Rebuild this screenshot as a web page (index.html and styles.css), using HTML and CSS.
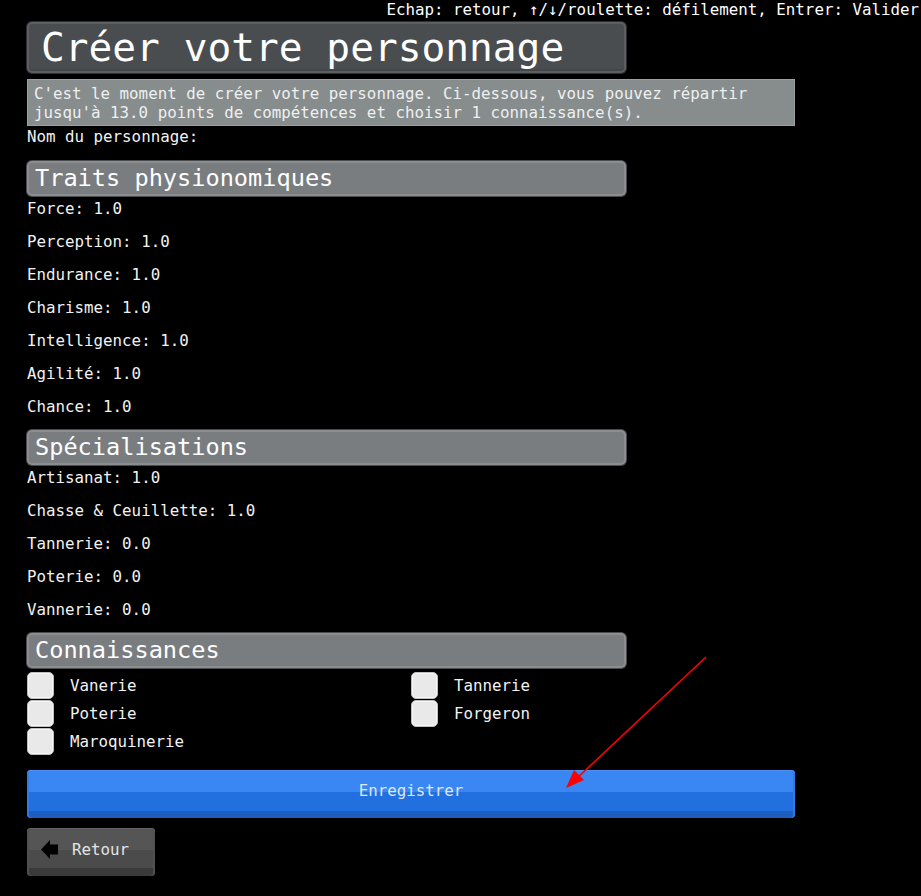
FILE: index.html
```html
<!DOCTYPE html>
<html lang="fr">
<head>
<meta charset="utf-8">
<title>Créer votre personnage</title>
<link rel="stylesheet" href="styles.css">
</head>
<body>
<div class="hint">Echap: retour, ↑/↓/roulette: défilement, Entrer: Valider</div>
<main class="page">
  <h1 class="title">Créer votre personnage</h1>
  <p class="desc">C'est le moment de créer votre personnage. Ci-dessous, vous pouvez répartir jusqu'à 13.0 points de compétences et choisir 1 connaissance(s).</p>
  <div class="name">Nom du personnage:</div>

  <h2 class="section">Traits physionomiques</h2>
  <ul class="stats">
    <li>Force: 1.0</li>
    <li>Perception: 1.0</li>
    <li>Endurance: 1.0</li>
    <li>Charisme: 1.0</li>
    <li>Intelligence: 1.0</li>
    <li>Agilité: 1.0</li>
    <li>Chance: 1.0</li>
  </ul>

  <h2 class="section">Spécialisations</h2>
  <ul class="stats">
    <li>Artisanat: 1.0</li>
    <li>Chasse &amp; Ceuillette: 1.0</li>
    <li>Tannerie: 0.0</li>
    <li>Poterie: 0.0</li>
    <li>Vannerie: 0.0</li>
  </ul>

  <h2 class="section">Connaissances</h2>
  <div class="checks">
    <label class="check"><span class="box"></span>Vanerie</label>
    <label class="check"><span class="box"></span>Tannerie</label>
    <label class="check"><span class="box"></span>Poterie</label>
    <label class="check"><span class="box"></span>Forgeron</label>
    <label class="check"><span class="box"></span>Maroquinerie</label>
  </div>

  <button class="btn-save"><span>Enregistrer</span></button>
  <button class="btn-back">
    <svg class="back-icon" width="18" height="19" viewBox="0 0 18 19"><path d="M0 9.5 L9 0 L9 4.5 L17 4.5 L17 14.5 L9 14.5 L9 19 Z" fill="#000"/></svg>
    <span>Retour</span>
  </button>
</main>
<svg class="annot" width="921" height="896" viewBox="0 0 921 896">
  <line x1="706" y1="657" x2="574" y2="781" stroke="#ff0000" stroke-width="1.6"/>
  <path d="M566 788 L574 770 L584 780 Z" fill="#ff0000"/>
</svg>
</body>
</html>
```
FILE: styles.css
```css
html, body {
  margin: 0;
  padding: 0;
  background: #000;
}
body {
  position: relative;
  width: 921px;
  height: 896px;
  overflow: hidden;
  color: #f2f2f2;
  font-family: "DejaVu Sans Mono", "Liberation Mono", monospace;
  font-size: 15.8px;
}
.hint {
  text-align: right;
  padding-right: 2px;
  height: 22px;
  line-height: 20px;
  color: #fff;
}
.page {
  padding-left: 27px;
  width: 768px;
}
.title {
  margin: 0;
  width: 599px;
  height: 51px;
  box-sizing: border-box;
  padding-left: 12px;
  font-weight: normal;
  font-size: 39.5px;
  line-height: 47px;
  color: #fff;
  background: #4a4d50;
  border: 2px solid #5c5f62;
  border-radius: 5px;
  box-shadow: 0 0 0 1px #2e3032, inset 0 -2px 0 #44474a;
}
.desc {
  margin: 6px 0 0;
  height: 47px;
  box-sizing: border-box;
  padding: 4px 6px;
  line-height: 19px;
  background: #878c8d;
  color: #eef0f0;
  border: 1px solid #9a9fa0;
}
.name {
  height: 20px;
  line-height: 20px;
  margin-top: 1px;
  margin-bottom: 14px;
}
.section {
  margin: 0 0 3px;
  width: 599px;
  height: 35px;
  box-sizing: border-box;
  padding-left: 6px;
  font-weight: normal;
  font-size: 23.6px;
  line-height: 30px;
  color: #fff;
  background: #797d80;
  border: 2px solid #8a8e91;
  border-radius: 5px;
  box-shadow: 0 0 0 1px #4a4c4e;
}
.stats {
  list-style: none;
  margin: 0;
  padding: 0;
}
.stats li {
  height: 33px;
  line-height: 20px;
}
.checks {
  display: grid;
  grid-template-columns: 1fr 1fr;
  grid-auto-rows: 28px;
}
.check {
  display: flex;
  align-items: center;
  gap: 16px;
  height: 28px;
}
.box {
  width: 27px;
  height: 27px;
  box-sizing: border-box;
  background: #e9e9e9;
  border: 1px solid #bdbdbd;
  border-radius: 5px;
  box-shadow: inset 0 0 0 1px #f6f6f6;
}
.btn-save {
  display: block;
  margin-top: 15px;
  width: 768px;
  height: 48px;
  padding: 0 0 6px;
  border: 0;
  border-radius: 4px;
  font: inherit;
  color: #dfe6f2;
  background: linear-gradient(#3a86f2 0, #3a86f2 22px, #2270e0 22px, #2270e0 41px, #1c5dbd 41px);
  box-shadow: inset 0 1px 0 #4a92f6, inset 2px 0 0 #3179e6, inset -2px 0 0 #3179e6;
  cursor: pointer;
}
.btn-save span {
  display: block;
  line-height: 40px;
}
.btn-back {
  display: flex;
  align-items: center;
  gap: 13px;
  margin-top: 10px;
  width: 128px;
  height: 48px;
  padding: 0 0 6px 14px;
  border: 0;
  border-radius: 4px;
  font: inherit;
  font-size: 15.8px;
  color: #e4e4e4;
  background: linear-gradient(#555 0, #555 22px, #4b4b4b 22px, #4b4b4b 40px, #3a3a3a 40px);
  box-shadow: inset 0 1px 0 #626262, inset 2px 0 0 #505050, inset -2px 0 0 #505050;
  cursor: pointer;
}
.back-icon {
  display: block;
}
.annot {
  position: absolute;
  left: 0;
  top: 0;
  pointer-events: none;
}
```
